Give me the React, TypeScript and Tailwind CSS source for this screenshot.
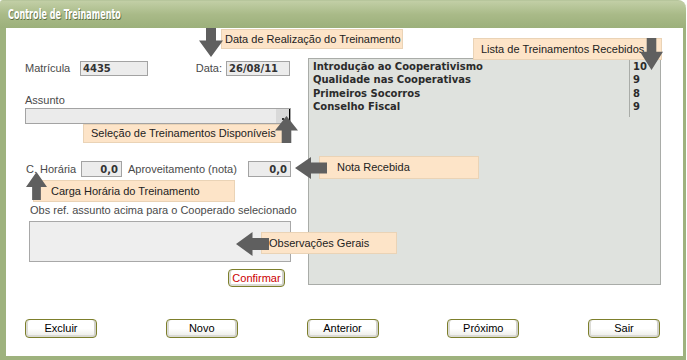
const Down = ({ className }: { className: string }) => (
  <svg className={className} viewBox="0 0 24 30" preserveAspectRatio="none">
    <polygon points="7,0 17,0 17,13 24,13 12,30 0,13 7,13" fill="#5f5f5f" />
  </svg>
);

const Up = ({ className }: { className: string }) => (
  <svg className={className} viewBox="0 0 24 30" preserveAspectRatio="none">
    <polygon points="12,0 24,16 17,16 17,30 7,30 7,16 0,16" fill="#5f5f5f" />
  </svg>
);

const Left = ({ className }: { className: string }) => (
  <svg className={className} viewBox="0 0 30 24" preserveAspectRatio="none">
    <polygon points="0,12 15,0 15,6 30,6 30,18 15,18 15,24" fill="#5f5f5f" />
  </svg>
);

const treinamentos = [
  { nome: "Introdução ao Cooperativismo", nota: "10" },
  { nome: "Qualidade nas Cooperativas", nota: "9" },
  { nome: "Primeiros Socorros", nota: "8" },
  { nome: "Conselho Fiscal", nota: "9" },
];

const XpButton = ({ label }: { label: string }) => (
  <button className="w-[72px] h-[19px] rounded-[4px] border border-[#7d7f2c] bg-gradient-to-b from-white via-white to-[#ebebe6] shadow-[inset_2px_0_0_#dcdcd6,inset_-2px_0_0_#d2d2cc,inset_0_-2px_0_#dadad4] text-[11px] leading-none text-black">
    {label}
  </button>
);

export default function App() {
  return (
    <div className="w-[687px] h-[360px] bg-white flex font-['Liberation_Sans',Arial,sans-serif] text-[11px] text-[#4a4a4a]">
      <div className="w-[686px] h-full flex flex-col">
        {/* title bar */}
        <div className="h-[28px] rounded-tl-[3px] rounded-tr-[8px] border-t border-[#b7c69c] bg-gradient-to-b from-[#c2cfa6] via-[#a9ba88] to-[#9cb07b] flex items-center pl-[8px]">
          <span className="inline-block origin-left [transform:scaleX(0.62)] whitespace-nowrap font-['DejaVu_Sans_Condensed','DejaVu_Sans',sans-serif] font-bold text-[14.5px] leading-none text-white [text-shadow:1px_1px_0_#5d6d40]">
            Controle de Treinamento
          </span>
        </div>

        {/* body */}
        <div className="relative flex-1 flex flex-col bg-white border-l-[6px] border-r-[3px] border-b-[4px] border-[#9eb27e]">
          <div className="flex pt-[30px] pl-[19px] gap-[17px]">
            {/* left column */}
            <div className="w-[266px] pt-[3px] flex flex-col">
              <div className="flex items-center h-[15px]">
                <span className="w-[55px]">Matrícula</span>
                <div className="w-[68px] h-[15px] bg-[#ececec] border border-[#a3a3a3] pl-[2px] flex items-center font-['DejaVu_Sans',sans-serif] font-bold text-[10px] text-[#333]">
                  4435
                </div>
                <span className="ml-auto">Data:</span>
                <div className="ml-[4px] mr-[1px] w-[64px] h-[15px] bg-[#ececec] border border-[#a3a3a3] pl-[2px] flex items-center font-['DejaVu_Sans',sans-serif] font-bold text-[10px] text-[#333]">
                  26/08/11
                </div>
              </div>

              <span className="mt-[18px] leading-[13px]">Assunto</span>
              <div className="mt-[1px] h-[16px] bg-[#ebebeb] border border-[#a3a3a3] flex justify-end items-stretch">
                <div className="w-[14px] bg-[#d9d9d9] border-r border-black flex items-end justify-center pb-[3px]">
                  <span className="w-[2px] h-[2px] bg-[#333]" />
                </div>
              </div>

              <div className="mt-[37px] h-[16px] flex items-center pl-[1px]">
                <span className="w-[55px]">C. Horária</span>
                <div className="w-[41px] h-[16px] bg-[#ececec] border border-[#a3a3a3] pr-[3px] flex items-center justify-end font-['DejaVu_Sans',sans-serif] font-bold text-[10px] text-[#333]">
                  0,0
                </div>
                <span className="ml-[6px]">Aproveitamento (nota)</span>
                <div className="ml-auto w-[43px] h-[16px] bg-[#ececec] border border-[#a3a3a3] pr-[3px] flex items-center justify-end font-['DejaVu_Sans',sans-serif] font-bold text-[10px] text-[#333]">
                  0,0
                </div>
              </div>

              <span className="mt-[27px] pl-[5px] leading-[13px] whitespace-nowrap">Obs ref. assunto acima para o Cooperado selecionado</span>
              <div className="mt-[4px] ml-[4px] h-[41px] bg-[#eeeeee] border border-[#a8a8a8]" />

              <button className="mt-[7px] mr-[6px] self-end w-[57px] h-[18px] rounded-[4px] border border-[#7d7f2c] bg-white shadow-[inset_2px_0_0_#dcdcd6,inset_-2px_0_0_#d2d2cc,inset_0_-2px_0_#dadad4] text-[11px] leading-none text-[#cc0000]">
                Confirmar
              </button>
            </div>

            {/* lista de treinamentos */}
            <div className="w-[353px] h-[227px] bg-[#dfe2de] border border-[#a9aca8] flex items-start">
              <div className="flex-1 pl-[4px] pt-[1px] pb-[3px] font-['DejaVu_Sans',sans-serif] font-bold text-[10px] leading-[13.4px] text-[#2b2b2b]">
                {treinamentos.map((t) => (
                  <div key={t.nome}>{t.nome}</div>
                ))}
              </div>
              <div className="w-[31px] pl-[3px] pt-[1px] pb-[3px] border-l border-[#a9aca8] font-['DejaVu_Sans',sans-serif] font-bold text-[10px] leading-[13.4px] text-[#2b2b2b]">
                {treinamentos.map((t) => (
                  <div key={t.nome}>{t.nota}</div>
                ))}
              </div>
            </div>
          </div>

          <div className="mt-[32px] ml-[19px] w-[635px] flex justify-between">
            <XpButton label="Excluir" />
            <XpButton label="Novo" />
            <XpButton label="Anterior" />
            <XpButton label="Próximo" />
            <XpButton label="Sair" />
          </div>

          {/* dicas sobre a tela */}
          <div className="absolute left-[215px] top-[1px] w-[182px] h-[20px] bg-[#fde4c8] border border-[#ead3b6] pl-[3px] flex items-center text-[#222]">
            Data de Realização do Treinamento
          </div>
          <Down className="absolute left-[193px] top-[0px] w-[24px] h-[29px]" />

          <div className="absolute left-[467px] top-[10px] w-[189px] h-[22px] bg-[#fde4c8] border border-[#ead3b6] pl-[7px] flex items-center text-[#222]">
            Lista de Treinamentos Recebidos
          </div>
          <Down className="absolute left-[634px] top-[10px] w-[23px] h-[32px]" />

          <div className="absolute left-[77px] top-[96px] w-[205px] h-[19px] bg-[#fde4c8] border border-[#ead3b6] pl-[7px] flex items-center text-[#222]">
            Seleção de Treinamentos Disponíveis
          </div>
          <Up className="absolute left-[269px] top-[88px] w-[23px] h-[27px]" />

          <div className="absolute left-[27px] top-[152px] w-[202px] h-[22px] bg-[#fde4c8] border border-[#ead3b6] pl-[17px] flex items-center text-[#222]">
            Carga Horária do Treinamento
          </div>
          <Up className="absolute left-[20px] top-[144px] w-[21px] h-[28px]" />

          <div className="absolute left-[313px] top-[128px] w-[160px] h-[23px] bg-[#fde4c8] border border-[#ead3b6] pl-[17px] flex items-center text-[#222]">
            Nota Recebida
          </div>
          <Left className="absolute left-[289px] top-[129px] w-[32px] h-[22px]" />

          <div className="absolute left-[255px] top-[204px] w-[136px] h-[22px] bg-[#fde4c8] border border-[#ead3b6] pl-[7px] flex items-center text-[#222]">
            Observações Gerais
          </div>
          <Left className="absolute left-[230px] top-[204px] w-[33px] h-[24px]" />
        </div>
      </div>
    </div>
  );
}
